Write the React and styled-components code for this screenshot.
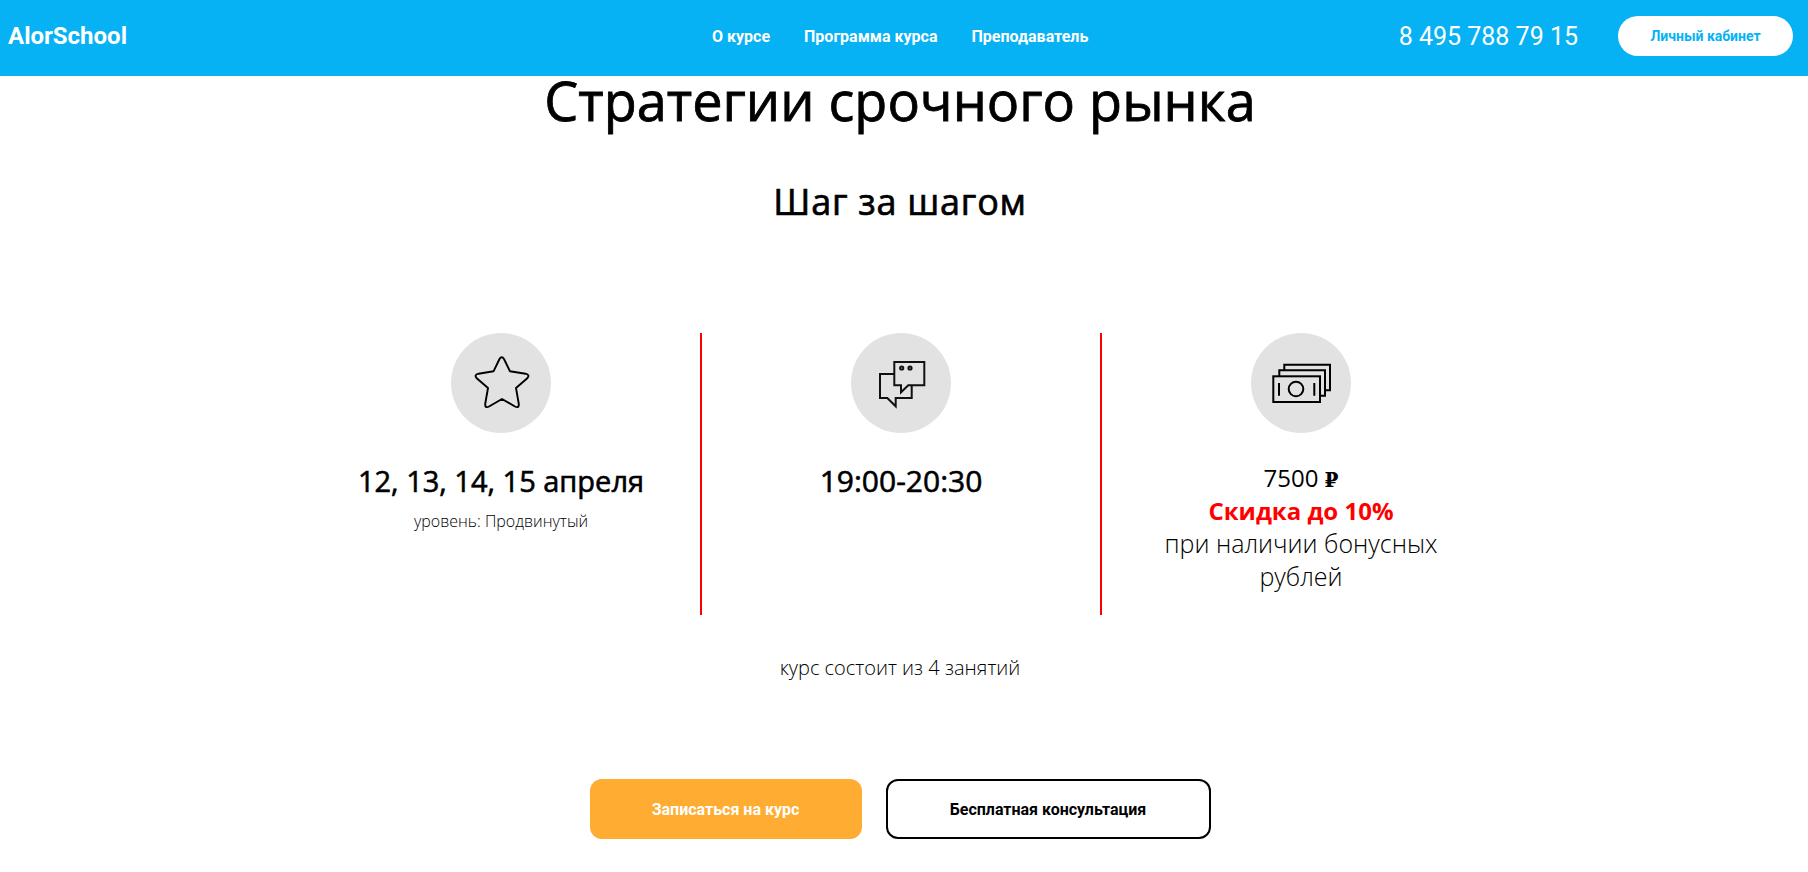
import React from 'react';
import styled, { createGlobalStyle } from 'styled-components';

const GlobalStyle = createGlobalStyle`
  html, body {
    margin: 0;
    padding: 0;
    height: 872px;
    overflow: hidden;
    background: #fff;
    font-family: "Open Sans", sans-serif;
    color: #000;
  }
`;

const Header = styled.header`
  height: 76px;
  box-sizing: border-box;
  background: #06b2f4;
  display: flex;
  align-items: center;
  padding: 0 15px 4px 8px;
  color: #fff;
  font-family: Roboto, sans-serif;
`;

const Logo = styled.div`
  width: 704px;
  font-size: 24px;
  font-weight: 700;
`;

const Nav = styled.nav`
  display: flex;
  gap: 34px;
  flex: 1;
`;

const NavLink = styled.a`
  font-size: 16px;
  font-weight: 700;
  color: #fff;
`;

const Phone = styled.div`
  font-size: 25px;
  font-weight: 400;
  margin-right: 40px;
`;

const CabinetButton = styled.button`
  width: 175px;
  height: 40px;
  border: none;
  border-radius: 20px;
  background: #fff;
  color: #06b2f4;
  font-family: Roboto, sans-serif;
  font-size: 14px;
  font-weight: 700;
`;

const Main = styled.main`
  width: 1800px;
  display: flex;
  flex-direction: column;
  align-items: center;
`;

const Title = styled.h1`
  margin: 0;
  font-size: 54px;
  line-height: 48px;
  font-weight: 400;
  -webkit-text-stroke: 0.8px #000;
`;

const Subtitle = styled.h2`
  margin: 53px 0 0;
  font-size: 36px;
  line-height: 50px;
  font-weight: 400;
  letter-spacing: 0.75px;
  -webkit-text-stroke: 0.7px #000;
`;

const Columns = styled.div`
  margin-top: 106px;
  width: 1200px;
  display: grid;
  grid-template-columns: repeat(3, 400px);
`;

const Column = styled.div`
  height: 282px;
  display: flex;
  flex-direction: column;
  align-items: center;
  text-align: center;
  box-sizing: border-box;
  border-left: 2px solid ${(p) => (p.$divided ? '#f00' : 'transparent')};
`;

const IconCircle = styled.div`
  width: 100px;
  height: 100px;
  border-radius: 50%;
  background: #e2e2e2;
  flex-shrink: 0;

  svg {
    display: block;
  }
`;

const Heading = styled.div`
  margin-top: 29px;
  font-size: ${(p) => (p.$time ? 30 : 29)}px;
  line-height: 38px;
  font-weight: 400;
  -webkit-text-stroke: 0.6px #000;
`;

const Level = styled.div`
  margin-top: 9px;
  font-size: 16px;
  line-height: 24px;
  font-weight: 300;
`;

const PriceBlock = styled.div`
  margin-top: 28px;
  width: 290px;
  font-size: 25px;
  line-height: 33px;
  font-weight: 300;
`;

const Price = styled.div`
  font-size: 24px;
  font-weight: 400;
`;

const RubleSign = styled.span`
  font-family: "DejaVu Serif", serif;
  font-size: 20px;
  line-height: 0;
  font-weight: 700;
`;

const Discount = styled.div`
  font-size: 24px;
  color: #f00;
  font-weight: 700;
`;

const Note = styled.div`
  margin-top: 39px;
  font-size: 20px;
  line-height: 28px;
  font-weight: 300;
`;

const Actions = styled.div`
  margin-top: 97px;
  display: flex;
  gap: 24px;
`;

const ActionButton = styled.button`
  height: 60px;
  width: ${(p) => p.$width}px;
  box-sizing: border-box;
  border-radius: 12px;
  border: ${(p) => (p.$primary ? 'none' : '2px solid #000')};
  background: ${(p) => (p.$primary ? '#ffac33' : '#fff')};
  color: ${(p) => (p.$primary ? '#fff' : '#000')};
  font-family: Roboto, sans-serif;
  font-size: 16px;
  font-weight: 700;
`;

const StarIcon = () => (
  <svg width="100" height="100" viewBox="0 0 100 100" fill="none" stroke="#000" strokeWidth="1.9" strokeLinejoin="round">
    <path d="M48.5 26 Q50.7 22.5 53 26 L59 38.3 L74.5 40.7 Q79.5 42 76 45.5 L65 55 L67.8 71 Q68 75.5 64 73.5 L51 66 L38 73.5 Q34 75.5 34.2 71 L37 55 L26 45.5 Q22.5 42 27.5 40.7 L42.5 38.3 Z" />
  </svg>
);

const ChatIcon = () => (
  <svg width="100" height="100" viewBox="0 0 100 100" fill="none" stroke="#111" strokeWidth="2">
    <path d="M43.3 29 H73.3 V52.3 H57.3 L50 59.3 V52.3 H43.3 Z" />
    <path d="M43.3 41 H29 V65 H36.3 L44.7 73.3 V65 H60.7 V52.3" />
    <circle cx="50.7" cy="35" r="1.6" />
    <circle cx="59" cy="35" r="1.6" />
  </svg>
);

const MoneyIcon = () => (
  <svg width="100" height="100" viewBox="0 0 100 100" fill="none" stroke="#000" strokeWidth="2">
    <path d="M33.3 37.3 V31.7 H79 V57.3 H74" />
    <path d="M28.3 43.3 V37.3 H74 V62.7 H69" />
    <rect x="22.3" y="43.3" width="46.7" height="25.7" />
    <circle cx="45" cy="56" r="7.3" />
    <path d="M28 50 V62.7 M63.3 50 V62.7" />
  </svg>
);

const App = () => (
  <>
    <GlobalStyle />
    <Header>
      <Logo>AlorSchool</Logo>
      <Nav>
        <NavLink>О курсе</NavLink>
        <NavLink>Программа курса</NavLink>
        <NavLink>Преподаватель</NavLink>
      </Nav>
      <Phone>8 495 788 79 15</Phone>
      <CabinetButton>Личный кабинет</CabinetButton>
    </Header>
    <Main>
      <Title>Стратегии срочного рынка</Title>
      <Subtitle>Шаг за шагом</Subtitle>
      <Columns>
        <Column>
          <IconCircle><StarIcon /></IconCircle>
          <Heading>12, 13, 14, 15 апреля</Heading>
          <Level>уровень: Продвинутый</Level>
        </Column>
        <Column $divided>
          <IconCircle><ChatIcon /></IconCircle>
          <Heading $time>19:00-20:30</Heading>
        </Column>
        <Column $divided>
          <IconCircle><MoneyIcon /></IconCircle>
          <PriceBlock>
            <Price>7500 <RubleSign>₽</RubleSign></Price>
            <Discount>Скидка до 10%</Discount>
            при наличии бонусных рублей
          </PriceBlock>
        </Column>
      </Columns>
      <Note>курс состоит из 4 занятий</Note>
      <Actions>
        <ActionButton $primary $width={272}>Записаться на курс</ActionButton>
        <ActionButton $width={325}>Бесплатная консультация</ActionButton>
      </Actions>
    </Main>
  </>
);

export default App;
